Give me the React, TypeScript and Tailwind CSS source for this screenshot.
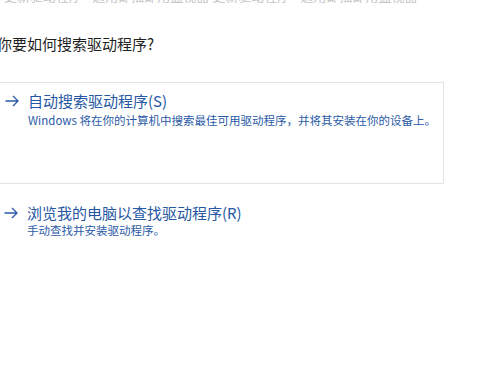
const font = "font-['Noto_Sans_CJK_SC','Noto_Sans',sans-serif]";

function Arrow() {
  return (
    <svg width="14" height="12" viewBox="0 0 14 12" fill="none" className="shrink-0">
      <path d="M0.5 6H13M8 1l5 5-5 5" stroke="#2a5aa6" strokeWidth="1.3" />
    </svg>
  );
}

function Option({ title, desc, bordered }: { title: string; desc: string; bordered?: boolean }) {
  return (
    <div
      className={
        bordered
          ? '-ml-2 w-[452px] h-[102px] border border-[#e3e3e3] pt-2 pl-3'
          : '-ml-2 w-[452px] pl-3 pt-[1px]'
      }
    >
      <div className="flex items-center gap-[9px]">
        <Arrow />
        <span className="text-[15px] leading-5 text-[#2657a3]">{title}</span>
      </div>
      <p className={`pl-[23px] text-[11.5px] text-[#2a5aa6] ${bordered ? 'mt-[1px] leading-4' : 'leading-[14px]'}`}>
        {desc}
      </p>
    </div>
  );
}

export default function App() {
  return (
    <div className={`h-[374px] w-full overflow-hidden bg-white ${font}`}>
      <div className="h-[3px] overflow-hidden">
        <p className="-mt-[11px] whitespace-nowrap pl-1 text-[13px] leading-[14px] text-[#c4c4c4]">
          更新驱动程序 - 通用即插即用监视器 更新驱动程序 - 通用即插即用监视器
        </p>
      </div>
      <h1 className="-ml-[3px] mt-[31px] text-[15px] leading-5 text-[#1f1f1f]">你要如何搜索驱动程序?</h1>
      <div className="mt-[28px] flex flex-col gap-[18px]">
        <Option
          bordered
          title="自动搜索驱动程序(S)"
          desc="Windows 将在你的计算机中搜索最佳可用驱动程序，并将其安装在你的设备上。"
        />
        <Option title="浏览我的电脑以查找驱动程序(R)" desc="手动查找并安装驱动程序。" />
      </div>
    </div>
  );
}
